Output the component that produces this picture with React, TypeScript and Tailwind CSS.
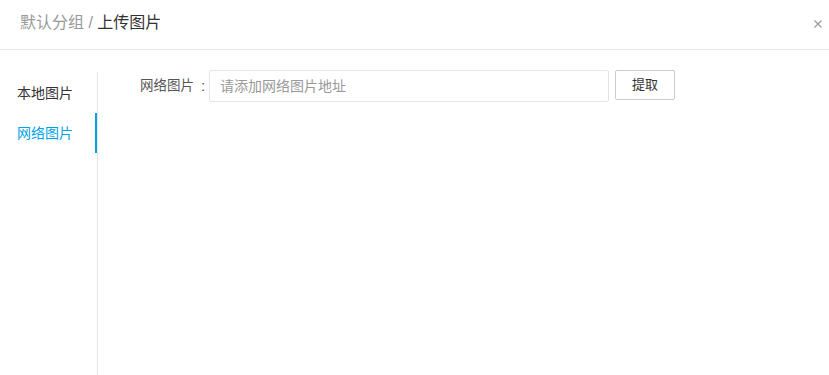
import { useState } from "react";

const font = { fontFamily: '"Liberation Sans", "Noto Sans CJK SC", sans-serif' };

// Upload image dialog - network image tab
const App = () => {
	const [tab, setTab] = useState<"local" | "web">("web");
	const [url, setUrl] = useState("");

	return (
		<div className="w-[829px] h-[375px] bg-white overflow-hidden" style={font}>
			{/* Header */}
			<div className="h-[50px] border-b border-[#e5e5e5] flex items-center justify-between pl-5 pr-[7px] pb-[3px]">
				<div className="text-[16px] leading-none">
					<span className="text-[#999]">默认分组 / </span>
					<span className="text-[#333]">上传图片</span>
				</div>
				<button className="w-[8px] h-[8px] flex items-center justify-center mt-[1px]">
					<svg width="8" height="8" viewBox="0 0 8 8" stroke="#999" strokeWidth="1.2">
						<path d="M0.5 0.5L7.5 7.5M7.5 0.5L0.5 7.5" />
					</svg>
				</button>
			</div>

			<div className="flex pt-5 h-[325px]">
				{/* Sidebar */}
				<div className="w-[98px] mt-[2px] border-r border-[#e5e5e5] pt-px">
					<div
						onClick={() => setTab("local")}
						className={`h-10 flex items-center pl-[17px] text-[14px] cursor-pointer ${tab === "local" ? "text-[#00a2ea] border-r-2 border-[#00a2ea]" : "text-[#333]"}`}
					>
						本地图片
					</div>
					<div
						onClick={() => setTab("web")}
						className={`h-10 flex items-center pl-[17px] text-[14px] cursor-pointer ${tab === "web" ? "text-[#00a2ea] border-r-2 border-[#00a2ea]" : "text-[#333]"}`}
					>
						网络图片
					</div>
				</div>

				{/* Content */}
				<div className="flex-1 pl-[42px]">
					<div className="flex items-start">
						<label className="w-[69px] shrink-0 h-8 flex items-center whitespace-nowrap text-[13.5px] text-[#555]">
							网络图片<span className="ml-[7px] text-[15px]">:</span>
						</label>
						<input
							value={url}
							onChange={(e) => setUrl(e.target.value)}
							placeholder="请添加网络图片地址"
							className="w-[400px] h-8 border border-[#e5e5e5] rounded-[2px] px-[10px] text-[14px] text-[#333] placeholder-[#999] outline-none"
						/>
						<button className="ml-[6px] w-[60px] h-[30px] border border-[#ccc] rounded-[2px] text-[13px] text-[#333] bg-white">
							提取
						</button>
					</div>
				</div>
			</div>
		</div>
	);
};

export default App;
